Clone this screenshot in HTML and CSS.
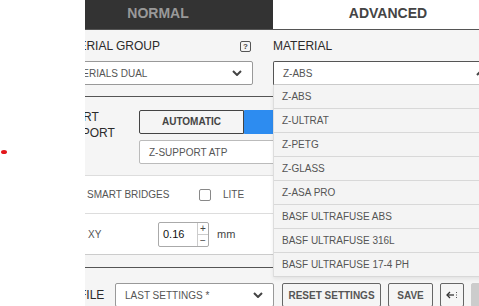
FILE: index.html
```html
<!DOCTYPE html>
<html lang="en">
<head>
    <title>Material Settings</title>
    <link rel="stylesheet" href="styles.css">
</head>
<body>

    <span class="dot"></span>

    <div class="viewport">
        <div class="panel">
            <div class="tabs">
                <div class="tab">NORMAL</div>
                <div class="tab active">ADVANCED</div>
            </div>

            <section class="group-section">
                <div class="col col-group">
                    <div class="col-head">
                        <span class="label">MATERIAL GROUP</span>
                        <span class="help">?</span>
                    </div>
                    <div class="select select-group">
                        <span>MATERIALS DUAL</span>
                        <svg class="chevron" width="10" height="6" viewBox="0 0 10 6"><polyline points="1,1 5,5 9,1" fill="none" stroke="#444" stroke-width="2"/></svg>
                    </div>
                </div>
                <div class="col col-material">
                    <div class="col-head">
                        <span class="label">MATERIAL</span>
                    </div>
                    <div class="select open">
                        <span>Z-ABS</span>
                        <svg class="chevron" width="10" height="6" viewBox="0 0 10 6"><polyline points="1,5 5,1 9,5" fill="none" stroke="#444" stroke-width="2"/></svg>
                    </div>
                    <ul class="dropdown">
                        <li>Z-ABS</li>
                        <li>Z-ULTRAT</li>
                        <li>Z-PETG</li>
                        <li>Z-GLASS</li>
                        <li>Z-ASA PRO</li>
                        <li>BASF ULTRAFUSE ABS</li>
                        <li>BASF ULTRAFUSE 316L</li>
                        <li>BASF ULTRAFUSE 17-4 PH</li>
                    </ul>
                </div>
            </section>

            <section class="support-section">
                <div class="support-label">SMART<br>SUPPORT</div>
                <div class="support-controls">
                    <div class="toggle">
                        <span class="toggle-btn">AUTOMATIC</span>
                        <span class="toggle-btn on"></span>
                    </div>
                    <div class="select select-wide">
                        <span>Z-SUPPORT ATP</span>
                        <svg class="chevron" width="10" height="6" viewBox="0 0 10 6"><polyline points="1,1 5,5 9,1" fill="none" stroke="#444" stroke-width="2"/></svg>
                    </div>
                </div>
            </section>

            <div class="option-row">
                <span class="option-label">SMART BRIDGES</span>
                <span class="checkbox"></span>
                <span class="option-text">LITE</span>
            </div>

            <div class="option-row row-xy">
                <span class="option-label label-xy">XY</span>
                <div class="number">
                    <span class="number-value">0.16</span>
                    <div class="spinner">
                        <span>+</span>
                        <span>&minus;</span>
                    </div>
                </div>
                <span class="unit">mm</span>
            </div>

            <div class="spacer"></div>

            <footer class="profile-row">
                <span class="label profile-label">PROFILE</span>
                <div class="select select-profile">
                    <span>LAST SETTINGS *</span>
                    <svg class="chevron" width="10" height="6" viewBox="0 0 10 6"><polyline points="1,1 5,5 9,1" fill="none" stroke="#444" stroke-width="2"/></svg>
                </div>
                <button class="btn btn-reset">RESET SETTINGS</button>
                <button class="btn btn-save">SAVE</button>
                <button class="btn btn-icon">
                    <svg width="12" height="8" viewBox="0 0 12 8">
                        <polyline points="4,1 1,4 4,7" fill="none" stroke="#333" stroke-width="1.3"/>
                        <line x1="1" y1="4" x2="8" y2="4" stroke="#333" stroke-width="1.3"/>
                        <rect x="10" y="1" width="1" height="1" fill="#555"/>
                        <rect x="10" y="3.5" width="1" height="1" fill="#555"/>
                        <rect x="10" y="6" width="1" height="1" fill="#555"/>
                    </svg>
                </button>
                <button class="btn btn-disabled"></button>
            </footer>
        </div>
    </div>

</body>
</html>
```

FILE: styles.css
```css
body {
    margin: 0;
    width: 479px;
    height: 306px;
    overflow: hidden;
    position: relative;
    background-color: #fff;
    font-family: "Liberation Sans", Arial, sans-serif;
}

.dot {
    position: absolute;
    left: 1px;
    top: 150px;
    width: 6px;
    height: 4px;
    border-radius: 50%;
    background-color: #e3161b;
}

.viewport {
    margin-left: 85px;
    width: 394px;
    height: 306px;
    overflow: hidden;
}

.panel {
    width: 460px;
    margin-left: -42px;
    min-height: 306px;
    background-color: #f5f5f5;
}

.tabs {
    display: flex;
    height: 29px;
    border-bottom: 1px solid #555;
}

.tab {
    flex: 1;
    display: flex;
    align-items: center;
    justify-content: center;
    padding-bottom: 4px;
    background-color: #333;
    color: #999;
    font-size: 14px;
    font-weight: bold;
}

.tab.active {
    background-color: #fff;
    color: #444;
}

.label {
    font-size: 12px;
    color: #2b2b2b;
}

/* material group / material */

.group-section {
    display: flex;
    gap: 20px;
    padding: 6px 0 11px 5px;
    border-bottom: 1px solid #555;
}

.col-group {
    width: 205px;
}

.col-material {
    width: 222px;
    position: relative;
}

.col-head {
    display: flex;
    align-items: center;
    justify-content: space-between;
    height: 20px;
    margin-bottom: 5px;
}

.col-group .label {
    padding-left: 6px;
}

.help {
    width: 9px;
    height: 9px;
    margin-right: 2px;
    border: 1px solid #555;
    border-radius: 2px;
    font-size: 8px;
    font-weight: bold;
    line-height: 9px;
    text-align: center;
    color: #444;
}

.select {
    box-sizing: border-box;
    display: flex;
    align-items: center;
    justify-content: space-between;
    height: 24px;
    padding: 0 10px 0 9px;
    background-color: #fff;
    border: 1px solid #999;
    border-radius: 2px;
    font-size: 10px;
    color: #555;
    white-space: nowrap;
}

.select-group {
    padding-left: 13px;
}

.select.open {
    border-color: #555;
    border-bottom-color: #ccc;
    border-radius: 2px 2px 0 0;
    padding-right: 8px;
}

.dropdown {
    position: absolute;
    top: 49px;
    left: 0;
    width: 222px;
    margin: 0;
    padding: 0;
    list-style: none;
    background-color: #f4f4f4;
    border-left: 1px solid #ddd;
    box-sizing: border-box;
    box-shadow: 0 2px 4px rgba(0, 0, 0, 0.08);
    z-index: 10;
}

.dropdown li {
    height: 23px;
    line-height: 23px;
    padding-left: 8px;
    border-bottom: 1px solid #d8d8d8;
    font-size: 10px;
    color: #555;
    white-space: nowrap;
}

/* support */

.support-section {
    display: flex;
    padding: 13px 0 11px 5px;
    border-bottom: 1px solid #ddd;
}

.support-label {
    box-sizing: border-box;
    width: 91px;
    padding-left: 9px;
    margin-top: -1px;
    font-size: 12px;
    line-height: 16px;
    color: #2b2b2b;
}

.support-controls {
    display: flex;
    flex-direction: column;
    gap: 6px;
}

.toggle {
    display: flex;
}

.toggle-btn {
    box-sizing: border-box;
    width: 105px;
    height: 24px;
    line-height: 22px;
    text-align: center;
    border: 1px solid #444;
    border-radius: 2px 0 0 2px;
    font-size: 10px;
    font-weight: bold;
    color: #444;
}

.toggle-btn.on {
    background-color: #2d8cf0;
    border-color: #2d8cf0;
    border-radius: 0 2px 2px 0;
}

.select-wide {
    width: 210px;
    border-color: #bbb;
}

/* option rows */

.option-row {
    display: flex;
    align-items: center;
    height: 37px;
    padding-left: 44px;
    background-color: #fff;
    border-bottom: 1px solid #ddd;
    font-size: 10px;
    color: #555;
}

.option-label {
    width: 112px;
}

.checkbox {
    box-sizing: border-box;
    width: 12px;
    height: 12px;
    border: 1px solid #888;
    border-radius: 2px;
    background-color: #fff;
}

.option-text {
    margin-left: 12px;
}

.row-xy {
    height: 40px;
    padding-left: 45px;
    border-bottom-color: #ccc;
}

.label-xy {
    width: 70px;
}

.number {
    box-sizing: border-box;
    display: flex;
    width: 51px;
    height: 25px;
    border: 1px solid #aaa;
    border-radius: 2px;
    background-color: #fff;
}

.number-value {
    flex: 1;
    padding-left: 4px;
    line-height: 23px;
    font-size: 11px;
    color: #111;
}

.spinner {
    display: flex;
    flex-direction: column;
    width: 10px;
    border-left: 1px solid #ccc;
}

.spinner span {
    flex: 1;
    font-size: 10px;
    line-height: 11px;
    text-align: center;
    color: #444;
}

.spinner span + span {
    border-top: 1px solid #ccc;
}

.unit {
    margin-left: 8px;
    font-size: 11px;
    color: #444;
}

.spacer {
    height: 12px;
    border-bottom: 1px solid #555;
}

/* profile footer */

.profile-row {
    display: flex;
    align-items: center;
    gap: 7px;
    padding: 15px 0 0 5px;
}

.profile-label {
    box-sizing: border-box;
    width: 67px;
    padding-left: 5px;
    margin-right: -7px;
}

.select-profile {
    width: 159px;
    margin-right: 1px;
    border-color: #999;
}

.btn {
    box-sizing: border-box;
    height: 24px;
    padding: 0;
    background-color: #f5f5f5;
    border: 1px solid #666;
    border-radius: 2px;
    font-family: "Liberation Sans", Arial, sans-serif;
    font-size: 10px;
    font-weight: bold;
    color: #555;
    white-space: nowrap;
}

.btn-reset {
    width: 99px;
}

.btn-save {
    width: 45px;
}

.btn-icon {
    width: 24px;
    display: flex;
    align-items: center;
    justify-content: center;
}

.btn-disabled {
    width: 24px;
    background-color: #ccc;
    border-color: #ccc;
}
```
